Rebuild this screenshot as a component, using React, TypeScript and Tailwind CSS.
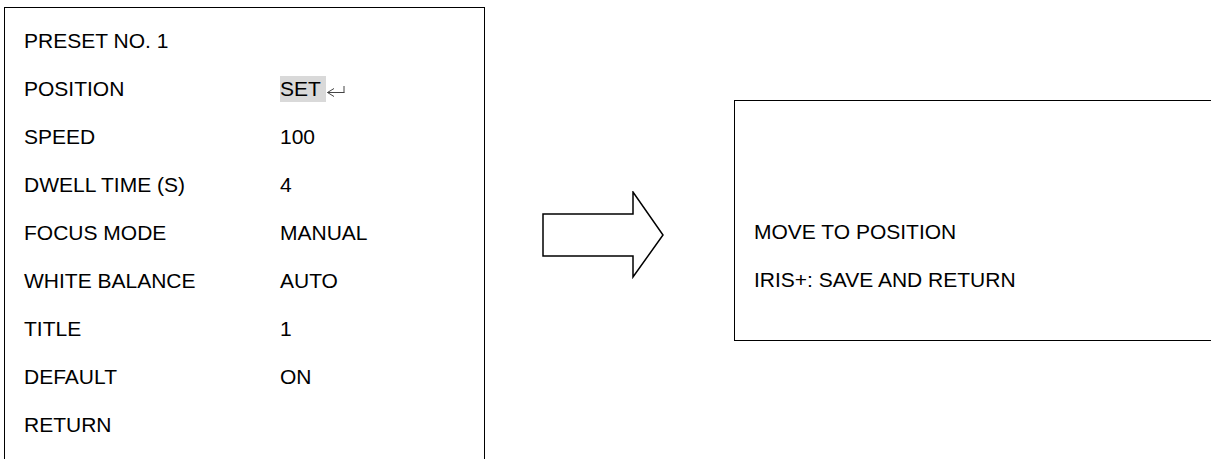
import React from "react";

const rows: [string, string][] = [
  ["PRESET NO. 1", ""],
  ["POSITION", "SET"],
  ["SPEED", "100"],
  ["DWELL TIME (S)", "4"],
  ["FOCUS MODE", "MANUAL"],
  ["WHITE BALANCE", "AUTO"],
  ["TITLE", "1"],
  ["DEFAULT", "ON"],
  ["RETURN", ""],
];

function ReturnMark() {
  return (
    <svg
      width="20"
      height="14"
      viewBox="0 0 20 14"
      className="inline-block align-[-2px]"
      fill="none"
      stroke="#444"
      strokeWidth="1"
    >
      <polyline points="8,4.5 1.5,8.5 8,12.5" />
      <line x1="1.5" y1="8.5" x2="18.5" y2="8.5" />
      <line x1="18" y1="8.5" x2="18" y2="2" />
    </svg>
  );
}

export default function App() {
  return (
    <div
      className="w-[1211px] h-[459px] overflow-hidden bg-white text-black flex items-start"
      style={{ fontFamily: '"Liberation Sans", Arial, sans-serif' }}
    >
      <div className="ml-[4px] mt-[7px] w-[481px] shrink-0 border border-black pt-[9px] pl-[19px] pr-[19px] pb-[24px] text-[21px] leading-[48px]">
        {rows.map(([label, value]) => (
          <div key={label} className="grid grid-cols-[256px_1fr]">
            <span>{label}</span>
            <span>
              {value === "SET" ? (
                <>
                  <span className="bg-[#d9d9d9] pt-[1px] pb-[2px]">SET </span>
                  <ReturnMark />
                </>
              ) : (
                value
              )}
            </span>
          </div>
        ))}
      </div>

      <svg
        width="123"
        height="88"
        viewBox="0 0 123 88"
        className="ml-[57px] mt-[191px] shrink-0"
      >
        <polygon
          points="1,23 91,23 91,1 121,44 91,86 91,65 1,65"
          fill="white"
          stroke="black"
          strokeWidth="1.5"
          strokeLinejoin="miter"
        />
      </svg>

      <div className="ml-[69px] mt-[100px] w-[520px] h-[241px] shrink-0 border border-black pt-[107px] pl-[19px] text-[21px] leading-[48px]">
        <div>MOVE TO POSITION</div>
        <div>IRIS+: SAVE AND RETURN</div>
      </div>
    </div>
  );
}
